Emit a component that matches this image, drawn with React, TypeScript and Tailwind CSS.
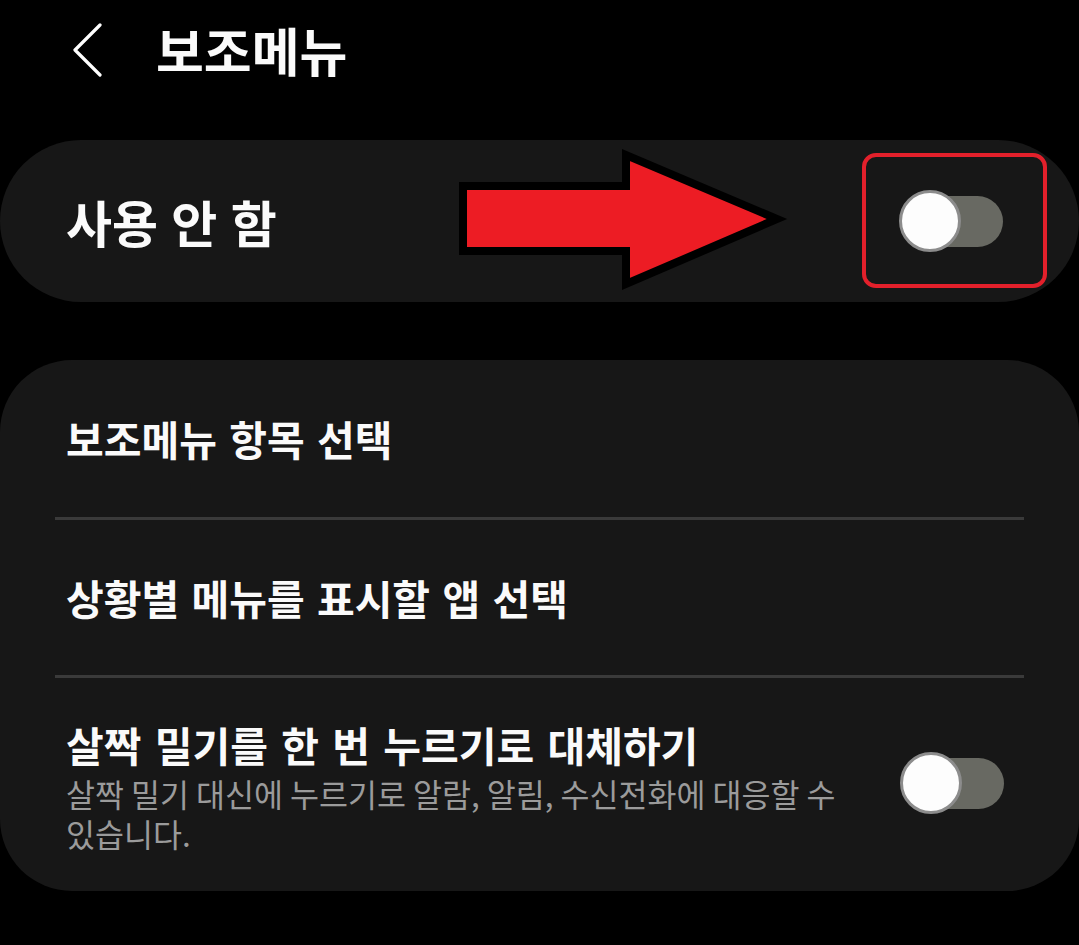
import React from 'react'

const font = "font-['Noto_Sans_CJK_KR','Noto_Sans',sans-serif]"

function Toggle() {
  return (
    <div className="relative w-[104px] h-[62px] shrink-0">
      <div className="absolute left-[4px] top-[6px] w-[100px] h-[51px] rounded-full bg-[#686962]" />
      <div className="absolute left-0 top-0 w-[62px] h-[62px] rounded-full bg-[#fdfdfd] border-[3px] border-[#8c8c8c]" />
    </div>
  )
}

function Arrow() {
  return (
    <svg
      className="absolute left-[455px] top-[5px]"
      width="335"
      height="150"
      viewBox="0 0 335 150"
    >
      <polygon
        points="8,41 171,41 171,10 322,74 171,139 171,106 8,106"
        fill="#ed1c24"
        stroke="#000"
        strokeWidth="8"
        strokeLinejoin="miter"
      />
    </svg>
  )
}

export default function App() {
  return (
    <div className={`w-[1079px] h-[945px] bg-black text-[#fafafa] ${font}`}>
      <div className="h-[100px] flex items-center pl-[72px]">
        <svg width="32" height="56" viewBox="0 0 32 56" className="mt-[-2px]">
          <polyline
            points="28,4 3,29 28,54"
            fill="none"
            stroke="#fff"
            strokeWidth="3.2"
            strokeLinecap="round"
            strokeLinejoin="round"
          />
        </svg>
        <h1 className="ml-[52px] text-[52px] font-bold leading-none">보조메뉴</h1>
      </div>

      <div className="relative mt-[40px] h-[162px] rounded-[81px] bg-[#171717] flex items-center pl-[66px] pr-[76px]">
        <span className="text-[50px] font-bold leading-none [word-spacing:2px]">사용 안 함</span>
        <div className="ml-auto">
          <Toggle />
        </div>
        <Arrow />
        <div className="absolute left-[862px] top-[13px] w-[185px] h-[135px] rounded-[14px] border-[4px] border-[#e3202b]" />
      </div>

      <div className="mt-[58px] rounded-[72px] bg-[#171717] px-[55px]">
        <div className="h-[157px] flex items-center pl-[11px]">
          <span className="text-[41px] font-bold leading-none [word-spacing:3px]">보조메뉴 항목 선택</span>
        </div>
        <div className="h-[3px] bg-[#3a3a3a]" />
        <div className="h-[155px] flex items-center pl-[11px]">
          <span className="text-[41px] font-bold leading-none [word-spacing:3px]">상황별 메뉴를 표시할 앱 선택</span>
        </div>
        <div className="h-[3px] bg-[#3a3a3a]" />
        <div className="flex items-center pl-[11px] pr-[20px] pt-[42px] pb-[38px]">
          <div className="w-[800px]">
            <div className="text-[41px] font-bold leading-[48px] [word-spacing:4px]">살짝 밀기를 한 번 누르기로 대체하기</div>
            <div className="mt-[5px] text-[31.5px] leading-[40px] text-[#9b9b9b] break-keep">
              살짝 밀기 대신에 누르기로 알람, 알림, 수신전화에 대응할 수 있습니다.
            </div>
          </div>
          <div className="ml-auto mt-[-8px]">
            <Toggle />
          </div>
        </div>
      </div>
    </div>
  )
}
